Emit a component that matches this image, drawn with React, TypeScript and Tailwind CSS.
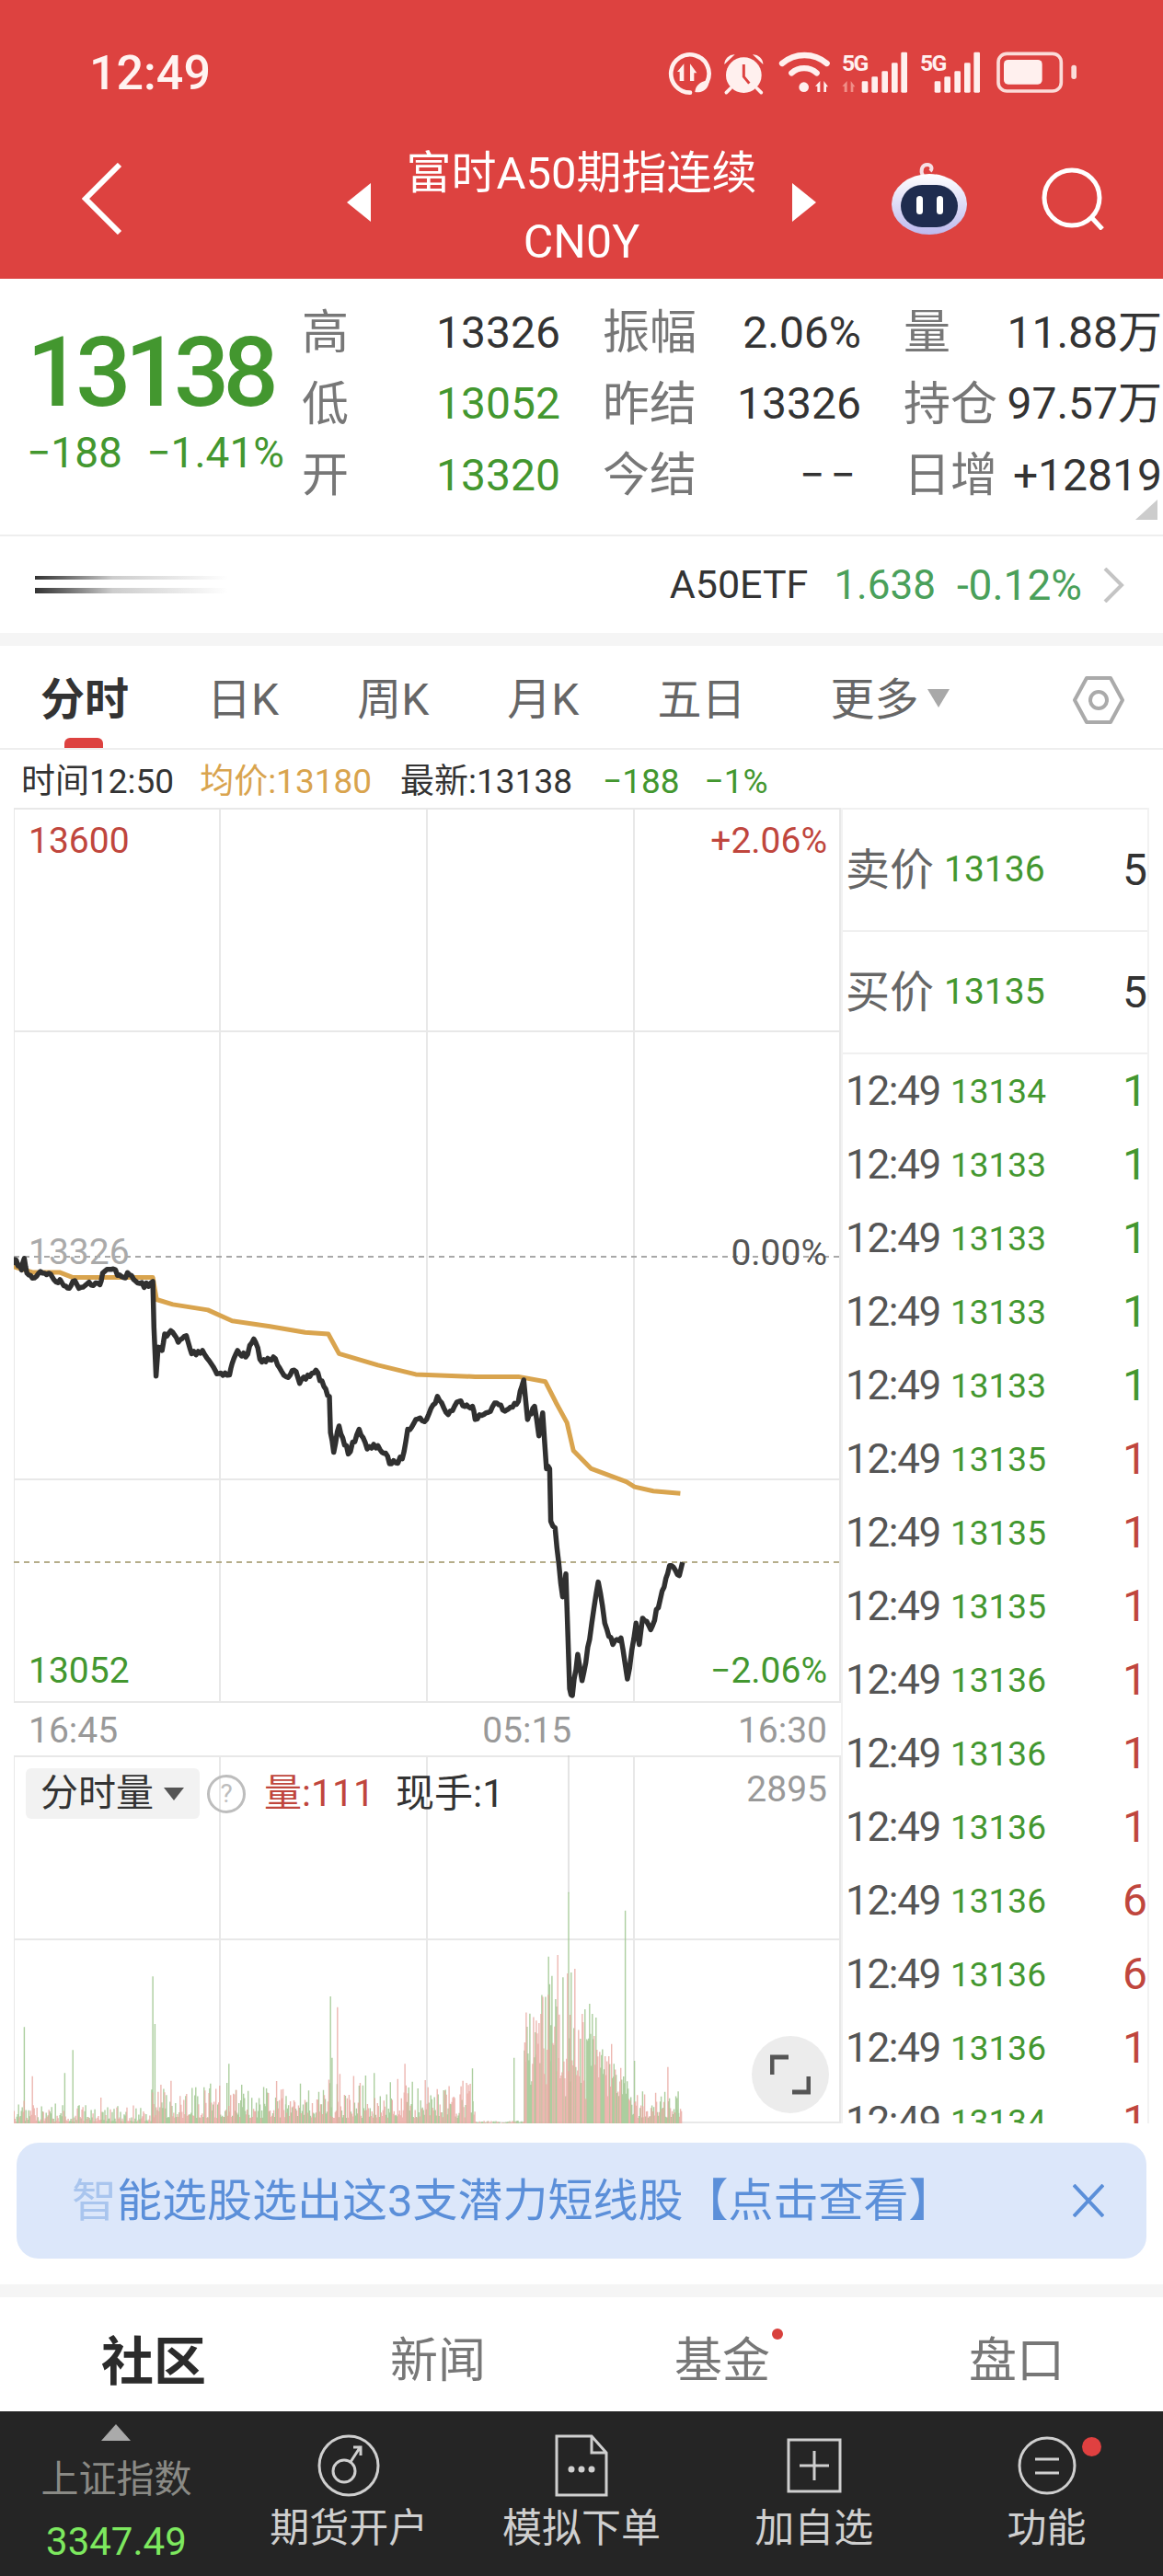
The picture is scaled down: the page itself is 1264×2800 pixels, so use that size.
import { Fragment } from "react";

const GREEN = "text-[#43972f]";
const RED = "text-[#c0463d]";
const DARK = "text-[#333333]";

// 走势线的关键点, 坐标取自放大图 (x/1.704, 1300 + y/2.8)
const pricePts: number[][] = [
  [25,210],[30,195],[40,225],[45,190],[50,235],[60,250],[75,230],[90,235],[100,255],[115,265],[125,280],[135,260],[150,278],[165,262],[185,270],[190,235],[210,222],[225,245],[240,240],[255,265],[275,275],[283,260],[285,400],[289,548],[293,460],[300,470],[305,420],[320,415],[330,445],[345,425],[355,480],[375,470],[395,520],[405,540],[425,545],[430,510],[440,470],[455,490],[470,435],[485,505],[510,495],[530,550],[545,530],[555,570],[585,530],[600,580],[610,610],[612,720],[618,780],[628,700],[645,785],[665,710],[680,770],[700,760],[725,815],[745,800],[755,710],[770,680],[790,680],[810,610],[830,665],[850,625],[875,640],[880,680],[900,660],[920,630],[935,655],[960,625],[970,560],[977,680],[990,640],[998,730],[1005,660],[1012,830],[1018,830],[1020,990],[1028,1010],[1035,1120],[1042,1220],[1048,1150],[1055,1500],[1060,1520],[1070,1395],[1078,1475],[1092,1350],[1108,1175],[1120,1300],[1135,1365],[1150,1345],[1162,1470],[1178,1300],[1184,1365],[1190,1285],[1205,1320],[1230,1190],[1240,1125],[1258,1155],[1264,1115],
];

const avgPts: number[][] = [
  [25,215],[60,232],[110,232],[135,248],[283,248],[290,315],[320,330],[385,347],[430,380],[500,397],[565,415],[608,420],[628,480],[700,515],[770,543],[880,550],[960,550],[1010,565],[1030,630],[1050,690],[1062,775],[1095,830],[1160,870],[1175,885],[1210,898],[1260,905],
];

const spikes: number[][] = [
  [45,1030],[60,1190],[120,1180],[135,1105],[187,1260],[283,865],[287,1020],[387,1245],[424,1150],[437,1235],[497,1245],[530,1255],[612,930],[625,965],[615,1130],[693,1180],[750,1150],[875,1165],[952,1130],[972,1080],[992,1120],[1016,800],[1033,795],[1018,890],[1053,590],[1056,990],[1088,1075],[1137,1150],[1158,650],[1175,1140],[1190,1240],[1237,1160],[1256,1240],
];

let seed = 7;
const rnd = () => {
  seed = (seed * 16807) % 2147483647;
  return seed / 2147483647;
};

const chartX = (x: number) => x / 1.704;
const chartY = (y: number) => 1300 + y / 2.8;

const toLine = (pts: number[][]) =>
  pts.map((p) => `${chartX(p[0]).toFixed(1)},${chartY(p[1]).toFixed(1)}`).join(" ");

function jag(pts: number[][], amp: number) {
  const out: number[][] = [];
  for (let i = 0; i < pts.length - 1; i++) {
    const [x1, y1] = pts[i];
    const [x2, y2] = pts[i + 1];
    const n = Math.max(1, Math.ceil(Math.abs(x2 - x1) / 4));
    out.push(pts[i]);
    for (let k = 1; k < n; k++) {
      const t = k / n;
      out.push([x1 + (x2 - x1) * t, y1 + (y2 - y1) * t + (rnd() - 0.5) * amp]);
    }
  }
  out.push(pts[pts.length - 1]);
  return out;
}

const priceLine = toLine(jag(pricePts, 18));
const avgLine = toLine(avgPts);

function volumeHeight(zx: number) {
  if (zx < 280) return rnd() * rnd() * 24 + 2;
  if (zx < 880) return rnd() * rnd() * 48 + 6;
  if (zx < 970) return rnd() * 3;
  if (zx < 1170) {
    const peak = 1 - Math.min(1, Math.abs(zx - 1040) / 130);
    return rnd() * 30 + rnd() * 150 * peak + 22;
  }
  return rnd() * rnd() * 36 + 6;
}

let greenBars = "";
let redBars = "";
for (let zx = 26; zx < 1262; zx += 1.7) {
  const h = volumeHeight(zx);
  const d = `M${chartX(zx).toFixed(1)} 2308V${(2308 - h).toFixed(1)}`;
  if (rnd() > 0.5) greenBars += d;
  else redBars += d;
}
spikes.forEach((s, i) => {
  const d = `M${chartX(s[0]).toFixed(1)} 2308V${(1860 + s[1] / 3).toFixed(1)}`;
  if (i % 3 === 1 && s[1] > 700) redBars += d;
  else greenBars += d;
});

const quoteRows = [
  [
    { label: "高", value: "13326", tone: DARK },
    { label: "振幅", value: "2.06%", tone: DARK },
    { label: "量", value: "11.88万", tone: DARK },
  ],
  [
    { label: "低", value: "13052", tone: GREEN },
    { label: "昨结", value: "13326", tone: DARK },
    { label: "持仓", value: "97.57万", tone: DARK },
  ],
  [
    { label: "开", value: "13320", tone: GREEN },
    { label: "今结", value: "−−", tone: DARK },
    { label: "日增", value: "+12819", tone: DARK },
  ],
];

const ticks = [
  { price: "13134", qty: "1", tone: GREEN },
  { price: "13133", qty: "1", tone: GREEN },
  { price: "13133", qty: "1", tone: GREEN },
  { price: "13133", qty: "1", tone: GREEN },
  { price: "13133", qty: "1", tone: GREEN },
  { price: "13135", qty: "1", tone: RED },
  { price: "13135", qty: "1", tone: RED },
  { price: "13135", qty: "1", tone: RED },
  { price: "13136", qty: "1", tone: RED },
  { price: "13136", qty: "1", tone: RED },
  { price: "13136", qty: "1", tone: RED },
  { price: "13136", qty: "6", tone: RED },
  { price: "13136", qty: "6", tone: RED },
  { price: "13136", qty: "1", tone: RED },
  { price: "13134", qty: "1", tone: RED },
];

function StatusIcons() {
  const bars = [
    [0, 205],
    [32, 190],
    [65, 172],
    [97, 145],
    [128, 110],
  ];
  return (
    <svg viewBox="0 0 1500 360" className="w-[500px] h-[120px] block">
      {/* 省流量 */}
      <path d="M150 242a62 62 0 1 1 56-36" fill="none" stroke="#fff0ee" strokeWidth="14" strokeLinecap="round" />
      <path d="M130 148v56h-14v-30h-8zM150 148l22 30h-9v26h-13z" fill="#fff0ee" />
      <path d="M166 240c2-24 20-36 46-38 0 26-18 42-46 38z" fill="#fff0ee" />
      {/* 闹钟 */}
      <circle cx="325" cy="185" r="58" fill="#fff0ee" />
      <path d="M325 150v40l18 22" fill="none" stroke="#dd4240" strokeWidth="9" />
      <path d="M262 150a32 32 0 0 1 34-32zM388 150a32 32 0 0 0-34-32z" fill="#fff0ee" />
      <path d="M282 228l-14 14M368 228l14 14" stroke="#fff0ee" strokeWidth="11" strokeLinecap="round" />
      {/* wifi */}
      <path d="M450 147a112 112 0 0 1 146 0" fill="none" stroke="#fff0ee" strokeWidth="19" strokeLinecap="round" />
      <path d="M481 178a62 62 0 0 1 82 0" fill="none" stroke="#fff0ee" strokeWidth="19" strokeLinecap="round" />
      <circle cx="521" cy="224" r="16" fill="#fff0ee" />
      <path d="M574 204v36h-9v-19h-7zM586 204l14 19h-6v17h-8z" fill="#fff0ee" />
      {/* 5G 信号 */}
      {[645, 900].map((x, i) => (
        <Fragment key={x}>
          <text x={x} y="172" fill="#fff0ee" fontSize="74" fontWeight="700" fontFamily="Roboto" textLength="88">
            5G
          </text>
          {bars.map((b) => (
            <rect key={b[0]} x={(i === 0 ? 710 : 947) + b[0]} y={b[1]} width="20" height={242 - b[1]} rx="4" fill="#fff0ee" />
          ))}
        </Fragment>
      ))}
      <path d="M662 204v36h-9v-19h-7zM674 204l14 19h-6v17h-8z" fill="#f08f88" />
      {/* 电量 */}
      <rect x="1155" y="115" width="205" height="122" rx="28" fill="none" stroke="#fbdcd9" strokeWidth="11" />
      <rect x="1173" y="135" width="125" height="80" rx="14" fill="#fff0ee" />
      <rect x="1393" y="152" width="17" height="46" rx="8" fill="#fbdcd9" />
    </svg>
  );
}

function RobotIcon() {
  return (
    <svg viewBox="0 0 84 78" className="w-[84px] h-[78px] block">
      <defs>
        <linearGradient id="robotBody" x1="0" y1="0" x2="0" y2="1">
          <stop offset="0" stopColor="#ffffff" />
          <stop offset="1" stopColor="#bdb9ee" />
        </linearGradient>
      </defs>
      <path d="M35 14c-3-6-1-12 5-12 4 0 6 4 3 7" fill="none" stroke="#f6dfe4" strokeWidth="4" />
      <ellipse cx="42" cy="45" rx="41" ry="33" fill="url(#robotBody)" />
      <rect x="11" y="24" width="62" height="46" rx="23" fill="#1f2c4f" />
      <rect x="28" y="36" width="7" height="20" rx="3.5" fill="#ffffff" />
      <rect x="50" y="36" width="7" height="20" rx="3.5" fill="#ffffff" />
    </svg>
  );
}

function PriceChart() {
  const labelCls = "absolute text-[39px] leading-none";
  return (
    <div className="relative w-[899px] h-[973px]">
      <svg viewBox="15 878 899 973" className="w-[899px] h-[973px] block">
        <g stroke="#e8e8e8" strokeWidth="2" fill="none">
          <path d="M15 879H914M15 1850H914M15 1608H914M15 1121H914" />
          <path d="M15 878V1851M239 878V1851M464 878V1851M689 878V1851M913 878V1851" />
        </g>
        <path d="M15 1366H914" stroke="#a8a8a8" strokeWidth="2" strokeDasharray="6 5" />
        <path d="M15 1698H914" stroke="#b5ad8a" strokeWidth="2" strokeDasharray="6 5" />
        <polyline points={avgLine} fill="none" stroke="#d9a44e" strokeWidth="5" strokeLinejoin="round" />
        <polyline points={priceLine} fill="none" stroke="#303030" strokeWidth="5.5" strokeLinejoin="round" />
      </svg>
      <span className={`${labelCls} left-[16px] top-[17px] ${RED}`}>13600</span>
      <span className={`${labelCls} right-[15px] top-[17px] ${RED}`}>+2.06%</span>
      <span className={`${labelCls} left-[16px] top-[464px] text-[#aaaaaa]`}>13326</span>
      <span className={`${labelCls} right-[15px] top-[465px] text-[#555555]`}>0.00%</span>
      <span className={`${labelCls} left-[16px] top-[919px] ${GREEN}`}>13052</span>
      <span className={`${labelCls} right-[15px] top-[919px] ${GREEN}`}>−2.06%</span>
    </div>
  );
}

function VolumeChart() {
  return (
    <div className="relative w-[899px] h-[400px]">
      <svg viewBox="15 1908 899 400" className="w-[899px] h-[400px] block">
        <g stroke="#e8e8e8" strokeWidth="2" fill="none">
          <path d="M15 1909H914M15 2108H914M15 2307H914" />
          <path d="M15 1908V2308M239 1908V2308M464 1908V2308M689 1908V2308M913 1908V2308" />
        </g>
        <path d="M618 1908V2058" stroke="#c9c9c9" strokeWidth="1" />
        <path d={greenBars} stroke="#a3c995" strokeWidth="1.4" fill="none" opacity="0.9" />
        <path d={redBars} stroke="#e8a59d" strokeWidth="1.4" fill="none" opacity="0.8" />
      </svg>
      <div className="absolute left-[13px] top-[14px] flex items-center h-[55px]">
        <div className="flex items-center h-[55px] w-[189px] rounded-md bg-[#f2f2f2] pl-[16px] gap-[11px]">
          <span className="text-[41px] leading-none text-[#333333]">分时量</span>
          <svg viewBox="0 0 22 14" className="w-[22px] h-[14px]">
            <path d="M0 0h22L11 14z" fill="#555555" />
          </svg>
        </div>
        <span className="ml-[8px] flex items-center justify-center w-[42px] h-[42px] rounded-full border-[3px] border-[#bdbdbd] text-[28px] leading-none text-[#bdbdbd]">
          ?
        </span>
        <span className={`ml-[20px] text-[41px] leading-none ${RED}`}>量:111</span>
        <span className="ml-[23px] text-[42px] leading-none text-[#333333]">现手:1</span>
      </div>
      <span className="absolute right-[15px] top-[18px] text-[39px] leading-none text-[#999999]">2895</span>
      <div className="absolute left-[802px] top-[305px] w-[84px] h-[84px] rounded-full bg-[#ececec] flex items-center justify-center">
        <svg viewBox="0 0 44 44" className="w-[44px] h-[44px]">
          <path d="M2 22V3H20M42 24V41H24" fill="none" stroke="#555555" strokeWidth="5" />
        </svg>
      </div>
    </div>
  );
}

function TradePanel() {
  const quoteRowCls = "flex items-center h-[133px] border-b-2 border-[#f0f0f0] pl-[3px] pr-0";
  return (
    <div className="w-[335px] h-[1430px] border-x-2 border-[#f2f2f2] overflow-hidden">
      <div className="border-t-2 border-[#f0f0f0]">
        {[
          { label: "卖价", price: "13136" },
          { label: "买价", price: "13135" },
        ].map((q) => (
          <div key={q.label} className={quoteRowCls}>
            <span className="text-[48px] leading-none text-[#666666]">{q.label}</span>
            <span className={`ml-[11px] text-[39px] leading-none ${GREEN}`}>{q.price}</span>
            <span className="ml-auto text-[48px] leading-none text-[#333333]">5</span>
          </div>
        ))}
      </div>
      {ticks.map((t, i) => (
        <div key={i} className="flex items-center h-[80px] pl-[3px] pr-0">
          <span className="text-[44px] leading-none tracking-[-0.03em] text-[#555555]">12:49</span>
          <span className={`ml-[11px] text-[37px] leading-none ${GREEN}`}>{t.price}</span>
          <span className={`ml-auto text-[48px] leading-none ${t.tone}`}>{t.qty}</span>
        </div>
      ))}
    </div>
  );
}

export default function App() {
  return (
    <div lang="zh-CN" className="w-[1264px] h-[2800px] overflow-hidden bg-white [font-family:Roboto,'Noto_Sans_CJK_SC',sans-serif]">
      {/* 顶栏 */}
      <header className="h-[303px] bg-[#dd4240] text-white">
        <div className="flex items-center justify-between h-[150px] pt-[20px] pb-[10px] pl-[97px] pr-[64px]">
          <span className="text-[52px] leading-none font-medium text-[#fff3f1]">12:49</span>
          <StatusIcons />
        </div>
        <div className="grid grid-cols-[1fr_auto_1fr] items-center h-[148px]">
          <div className="pl-[89px] pb-[16px]">
            <svg viewBox="0 0 44 78" className="w-[44px] h-[78px] block">
              <path d="M41 2L4 39l37 37" fill="none" stroke="#ffffff" strokeWidth="6" />
            </svg>
          </div>
          <div className="flex items-center gap-[38px]">
            <svg viewBox="0 0 26 42" className="w-[26px] h-[42px] mt-[-8px]">
              <path d="M26 0V42L0 21z" fill="#ffffff" />
            </svg>
            <div className="flex flex-col items-center gap-[24px] pt-[3px]">
              <span className="text-[49px] leading-[50px] whitespace-nowrap">富时A50期指连续</span>
              <span className="text-[50px] leading-[50px]">CN0Y</span>
            </div>
            <svg viewBox="0 0 26 42" className="w-[26px] h-[42px] mt-[-8px]">
              <path d="M0 0V42L26 21z" fill="#ffffff" />
            </svg>
          </div>
          <div className="flex items-center justify-end gap-[80px] pr-[64px] pb-[16px]">
            <RobotIcon />
            <svg viewBox="0 0 68 68" className="w-[68px] h-[68px] block">
              <circle cx="33" cy="33" r="30" fill="none" stroke="#ffffff" strokeWidth="5" />
              <path d="M54 54l12 13" fill="none" stroke="#ffffff" strokeWidth="5" />
            </svg>
          </div>
        </div>
      </header>

      {/* 行情 */}
      <section className="relative flex h-[280px] border-b-2 border-[#eeeeee]">
        <div className="w-[328px] pt-[46px] pl-[29px]">
          <div className={`text-[106px] leading-[112px] font-medium tracking-[-0.065em] ${GREEN}`}>13138</div>
          <div className={`mt-[6px] flex justify-between w-[280px] text-[46px] leading-[50px] ${GREEN}`}>
            <span>−188</span>
            <span>−1.41%</span>
          </div>
        </div>
        <div className="pt-[20px]">
          {quoteRows.map((row, i) => (
            <div key={i} className="flex gap-[46px] h-[77.5px] items-center">
              {row.map((c) => (
                <div key={c.label} className="flex items-center justify-between w-[281px]">
                  <span className="text-[51px] leading-none text-[#777777]">{c.label}</span>
                  <span className={`text-[48px] leading-none whitespace-nowrap ${c.value === "−−" ? "tracking-[6px]" : ""} ${c.tone}`}>{c.value}</span>
                </div>
              ))}
            </div>
          ))}
        </div>
        <svg viewBox="0 0 24 22" className="absolute right-[6px] bottom-[16px] w-[24px] h-[22px]">
          <path d="M24 0V22H0z" fill="#cccccc" />
        </svg>
      </section>

      {/* ETF */}
      <div className="flex items-center h-[105px] pl-[38px] pr-[42px]">
        <div className="flex flex-col gap-[9px] w-[210px]">
          <div className="h-[4px] bg-linear-to-r from-[#333333] via-[#cccccc] via-40% to-white" />
          <div className="h-[6px] bg-linear-to-r from-[#333333] via-[#cccccc] via-40% to-white" />
        </div>
        <span className="ml-auto text-[43px] leading-none text-[#333333]">A50ETF</span>
        <span className="ml-[28px] text-[44px] leading-none text-[#4aa05a]">1.638</span>
        <span className="ml-[23px] text-[46px] leading-none text-[#4aa05a]">-0.12%</span>
        <svg viewBox="0 0 24 38" className="ml-[22px] w-[24px] h-[38px]">
          <path d="M3 1l18 18L3 37" fill="none" stroke="#c4c4c4" strokeWidth="4" />
        </svg>
      </div>
      <div className="h-[14px] bg-[#f5f5f5]" />

      {/* 周期 */}
      <div className="relative flex items-center h-[113px] pl-[44px] pt-[6px] gap-[85px] border-b-2 border-[#eeeeee] text-[48px] leading-none text-[#666666]">
        <span className="font-bold text-[#333333]">分时</span>
        <span>日K</span>
        <span>周K</span>
        <span>月K</span>
        <span>五日</span>
        <span className="flex items-center gap-[10px] ml-[7px]">
          更多
          <svg viewBox="0 0 24 20" className="w-[24px] h-[20px] mt-[-4px]">
            <path d="M0 0h24L12 20z" fill="#a8a8a8" />
          </svg>
        </span>
        <svg viewBox="0 0 56 54" className="ml-auto mr-[42px] w-[56px] h-[54px]">
          <path d="M15 3H41L54 27 41 51H15L2 27z" fill="none" stroke="#aaaaaa" strokeWidth="4" strokeLinejoin="round" />
          <circle cx="28" cy="27" r="9" fill="none" stroke="#aaaaaa" strokeWidth="4" />
        </svg>
        <div className="absolute left-[70px] bottom-0 w-[42px] h-[11px] rounded-t-md bg-[#dd4240]" />
      </div>

      {/* 分时信息 */}
      <div className="flex items-center h-[63px] pl-[23px] pt-[6px] text-[37px] leading-none text-[#333333]">
        <span>时间12:50</span>
        <span className="ml-[28px] text-[#d9a44e]">均价:13180</span>
        <span className="ml-[31px]">最新:13138</span>
        <span className={`ml-[33px] ${GREEN}`}>−188</span>
        <span className={`ml-[27px] ${GREEN}`}>−1%</span>
      </div>

      {/* 图表 + 明细 */}
      <div className="flex pl-[15px]">
        <div className="w-[899px]">
          <PriceChart />
          <div className="flex items-center h-[57px] pl-[16px] pr-[15px] pt-[4px] text-[39px] leading-none text-[#999999]">
            <span>16:45</span>
            <span className="ml-[396px]">05:15</span>
            <span className="ml-auto">16:30</span>
          </div>
          <VolumeChart />
        </div>
        <TradePanel />
      </div>

      {/* 广告条 */}
      <div className="px-[18px] pt-[21px] pb-[28px]">
        <div className="flex items-center h-[126px] pl-[60px] pr-[46px] rounded-[24px] bg-[#dce7fa]">
          <span className="text-[49px] leading-none whitespace-nowrap text-[#5b8fd9]">
            <span className="text-[#a9c5ee]">智</span>能选股选出这3支潜力短线股【点击查看】
          </span>
          <svg viewBox="0 0 34 36" className="ml-auto w-[34px] h-[36px]">
            <path d="M1 1l32 34M33 1L1 35" fill="none" stroke="#5b8fd9" strokeWidth="4" />
          </svg>
        </div>
      </div>
      <div className="h-[14px] bg-[#f5f5f5]" />

      {/* 内容 tab */}
      <div className="flex items-center h-[124px] pt-[16px] text-[52px] leading-none text-[#777777]">
        <span className="ml-[110px] text-[57px] font-bold text-[#2b2b2b]">社区</span>
        <span className="ml-[200px]">新闻</span>
        <span className="relative ml-[205px]">
          基金
          <span className="absolute right-[-14px] top-[-10px] w-[12px] h-[12px] rounded-full bg-[#d8403c]" />
        </span>
        <span className="ml-[216px]">盘口</span>
      </div>

      {/* 底栏 */}
      <footer className="grid grid-cols-5 h-[179px] bg-[#252525] text-[43px] leading-none text-[#cfcfcf]">
        <div className="flex flex-col items-center pt-[14px]">
          <svg viewBox="0 0 32 18" className="w-[32px] h-[18px]">
            <path d="M16 0l16 18H0z" fill="#aaaaaa" />
          </svg>
          <span className="mt-[22px] text-[41px] text-[#8a8a85]">上证指数</span>
          <span className="mt-[26px] text-[42px] text-[#7de85f]">3347.49</span>
        </div>
        <div className="flex flex-col items-center pt-[25px]">
          <svg viewBox="0 0 68 68" className="w-[68px] h-[68px]">
            <circle cx="34" cy="34" r="32" fill="none" stroke="#cfcfcf" strokeWidth="3" />
            <circle cx="29" cy="40" r="12" fill="none" stroke="#cfcfcf" strokeWidth="3" />
            <path d="M36 30l11-17M39 14h8v9" fill="none" stroke="#cfcfcf" strokeWidth="3" />
          </svg>
          <span className="mt-[13px]">期货开户</span>
        </div>
        <div className="flex flex-col items-center pt-[25px]">
          <svg viewBox="0 0 58 68" className="w-[58px] h-[68px]">
            <path d="M2 2H40L56 20V66H2zM40 2V20H56" fill="none" stroke="#cfcfcf" strokeWidth="3" />
            <circle cx="18" cy="38" r="3.5" fill="#cfcfcf" />
            <circle cx="29" cy="38" r="3.5" fill="#cfcfcf" />
            <circle cx="40" cy="38" r="3.5" fill="#cfcfcf" />
          </svg>
          <span className="mt-[13px]">模拟下单</span>
        </div>
        <div className="flex flex-col items-center pt-[25px]">
          <svg viewBox="0 0 68 68" className="w-[68px] h-[68px]">
            <path d="M6 6H62V62H6zM34 18V50M18 34H50" fill="none" stroke="#cfcfcf" strokeWidth="3" />
          </svg>
          <span className="mt-[13px]">加自选</span>
        </div>
        <div className="relative flex flex-col items-center pt-[25px]">
          <svg viewBox="0 0 68 68" className="w-[68px] h-[68px]">
            <circle cx="34" cy="34" r="30" fill="none" stroke="#cfcfcf" strokeWidth="3" />
            <path d="M21 27H47M21 42H47" fill="none" stroke="#cfcfcf" strokeWidth="3" />
          </svg>
          <span className="mt-[13px]">功能</span>
          <span className="absolute left-[165px] top-[28px] w-[21px] h-[21px] rounded-full bg-[#e04040]" />
        </div>
      </footer>
    </div>
  );
}
